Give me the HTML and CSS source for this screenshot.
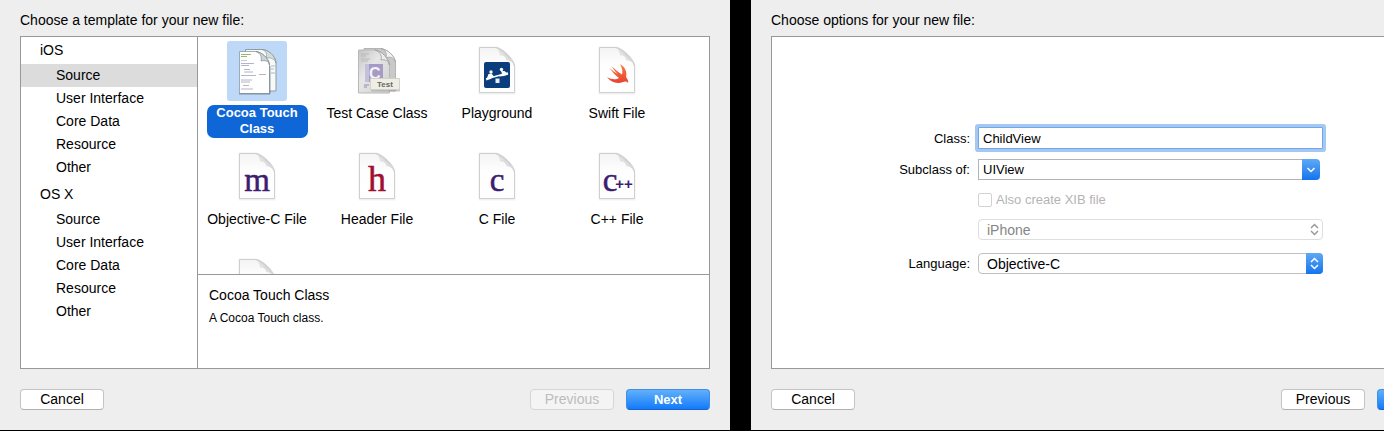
FILE: index.html
```html
<!doctype html>
<html lang="en">
<head>
  <meta charset="UTF-8">
  <meta name="viewport" content="width=device-width, initial-scale=1.0">
  <title>New File</title>
  <link rel="stylesheet" href="styles.css">
</head>
<body>
  <svg class="defs" width="0" height="0" aria-hidden="true">
    <defs>
      <linearGradient id="paper" x1="0" y1="0" x2="0" y2="1">
        <stop offset="0" stop-color="#f4f4f4"/>
        <stop offset=".4" stop-color="#fefefe"/>
        <stop offset="1" stop-color="#fff"/>
      </linearGradient>
      <linearGradient id="curl" x1="0" y1="1" x2="1" y2="0">
        <stop offset="0" stop-color="#fff"/>
        <stop offset=".45" stop-color="#f0f0f0"/>
        <stop offset=".6" stop-color="#cfcfcf"/>
        <stop offset="1" stop-color="#f6f6f6"/>
      </linearGradient>
      <linearGradient id="bird" x1="0" y1="0" x2="0" y2="1">
        <stop offset="0" stop-color="#f5804a"/>
        <stop offset="1" stop-color="#e8402f"/>
      </linearGradient>
      <linearGradient id="grey" x1="0" y1="0" x2="1" y2="1">
        <stop offset="0" stop-color="#c4c4c4"/>
        <stop offset=".4" stop-color="#e6e6e6"/>
        <stop offset="1" stop-color="#cfcfcf"/>
      </linearGradient>
      <symbol id="doc" viewBox="0 0 60 60">
        <path d="M12.5 6.5H29C34 7 47.5 20 47.5 26V52.5H12.5Z" fill="none" stroke="#000" stroke-opacity=".06" stroke-width="2"/>
        <path d="M12.5 6.5H29C35 7 47.5 18 47.5 25V51.5H12.5Z" fill="url(#paper)" stroke="#cfcfcf"/>
        <path d="M29 6.5C32 8 33.5 11 33.5 14C36 13.500 39 15 39.500 18.500C43 19 46.500 21 47.500 25C45 17 36 8 29 6.5Z" fill="url(#curl)" stroke="#cdcdcd" stroke-width=".6"/>
      </symbol>
    </defs>
  </svg>

  <main class="dialog">
    <h1 class="dialog-title">Choose a template for your new file:</h1>
    <div class="panel chooser">
      <nav class="sidebar">
        <h2>iOS</h2>
        <a href="#" class="active">Source</a>
        <a href="#">User Interface</a>
        <a href="#">Core Data</a>
        <a href="#">Resource</a>
        <a href="#">Other</a>
        <h2>OS X</h2>
        <a href="#">Source</a>
        <a href="#">User Interface</a>
        <a href="#">Core Data</a>
        <a href="#">Resource</a>
        <a href="#">Other</a>
      </nav>
      <div class="content">
        <div class="templates">
          <button type="button" class="template selected">
            <svg class="template-icon" viewBox="0 0 60 60">
              <path d="M18.5 8.5H36C41 9 49 15 49 22V50H18.5Z" fill="#f7faf7" stroke="#8f9b9f"/>
              <path d="M35 8.5C40 10 40 14 39 17C43 16 48 18 49 22C48 14 41 9 35 8.5Z" fill="#d5dcdc" stroke="#8f9b9f" stroke-width=".7"/>
              <path d="M44 25h4M44 28h3M44 32h4" stroke="#a9b7c9"/>
              <path d="M12.5 10.5H29C34 11 42.5 17 42.5 24V52.5H12.5Z" fill="#fff" stroke="#8b9aa6" stroke-width=".8"/>
              <path d="M12 53h31V25" fill="none" stroke="#4c5965" stroke-opacity=".55"/>
              <path d="M29 10.5C34 12 35 17 34 20C38 19 42 20 42.5 24C41 16 34 11 29 10.5Z" fill="#cdd6d6" stroke="#7e8b8f" stroke-width=".7"/>
              <path d="M14 13.5h10M14 15.5h6" stroke="#94bd68"/>
              <path d="M14 19.5h6" stroke="#b3bdca" stroke-width=".8"/>
              <path d="M14 22.5h13M14 24.5h8M17 28.5h6M17 31h9" stroke="#98a3c0" stroke-width=".8"/>
              <path d="M14 34.5h15M32 33.5h7M14 39h11M14 41h9M16 44.5h6M14 48h12" stroke="#a0a5b5" stroke-width=".8"/>
            </svg>
            <span class="template-name">Cocoa Touch Class</span>
          </button>
          <button type="button" class="template">
            <svg class="template-icon" viewBox="0 0 60 60">
              <path d="M17 7.5H34C41 9 47 14 48.5 21V50H17Z" fill="#c9c9c9" stroke="#b4b4b4"/>
              <path d="M34 7.5C39 9 40 13 39 17C43 15 47 17 48.5 21C47 14 41 9 34 7.5Z" fill="#f2f2f2" stroke="#a2a2a2" stroke-width=".8"/>
              <path d="M11.5 9H28C35 10 42.5 17 42.5 24V52H11.5Z" fill="url(#grey)" stroke="#b9b9b9"/>
              <path d="M28 9C34 11 35 16 34 19C38 18 42 20 42.5 24C41 17 35 10 28 9Z" fill="#ededed" stroke="#9c9c9c" stroke-width=".8"/>
              <path d="M14 13h8M14 15h5M14 18h9M14 20h7" stroke="#b4b4b4" stroke-width=".8"/>
              <path d="M18 23h18v18H18z" fill="#a59bc4"/>
              <path d="M18 23h4v18h-4z" fill="#c6bfda"/>
              <text x="22" y="38" class="glyph-test-c">C</text>
              <path d="M17 44h5M17 46h3" stroke="#948ab4" stroke-width="1.2"/>
              <path d="M24 39.5h29v11H24z" fill="#999" opacity=".5"/>
              <path d="M23.500 37.500h29v11h-29z" fill="#efeee5" stroke="#d2d1ca"/>
              <text x="30" y="46" class="glyph-test">Test</text>
            </svg>
            <span class="template-name">Test Case Class</span>
          </button>
          <button type="button" class="template">
            <svg class="template-icon" viewBox="0 0 60 60">
              <use href="#doc"/>
              <rect x="17" y="21" width="26" height="26" rx="2" fill="#0b3c7c"/>
              <path d="M19 38L41 32" stroke="#fff" stroke-width="1.6"/>
              <path d="M28.500 37.500h4V42h-4z" fill="#e6edf6"/>
              <circle cx="24" cy="31" r="1.700" fill="#fff"/>
              <circle cx="34.500" cy="28.500" r="1.700" fill="#fff"/>
              <path d="M21.500 33L24.500 32.500L27 35.500L23.500 38L19 39.500ZM34 30L37.500 30L41.500 33.500L37 35L32 35.500L35 32.500Z" fill="#fff"/>
            </svg>
            <span class="template-name">Playground</span>
          </button>
          <button type="button" class="template">
            <svg class="template-icon" viewBox="0 0 60 60">
              <use href="#doc"/>
              <path d="M33 23C38 26 40.5 31 39 36C41 38.5 41.5 41 41 42C39.5 40 37.5 40.5 36 41C30 43.5 23.5 41 20 36C24 38.5 29 39 32 37C28 34 25 30.5 22.5 27C25.5 29.5 28 31.5 30.5 33C28.5 31 26 27.5 24.5 25C28 28.5 31.5 31.5 35 33.5C36 30.5 35 26.5 33 23Z" fill="url(#bird)"/>
            </svg>
            <span class="template-name">Swift File</span>
          </button>
          <button type="button" class="template">
            <svg class="template-icon" viewBox="0 0 60 60">
              <use href="#doc"/>
              <text x="30" y="44" class="glyph">m</text>
            </svg>
            <span class="template-name">Objective-C File</span>
          </button>
          <button type="button" class="template">
            <svg class="template-icon" viewBox="0 0 60 60">
              <use href="#doc"/>
              <text x="30" y="44" class="glyph glyph-header">h</text>
            </svg>
            <span class="template-name">Header File</span>
          </button>
          <button type="button" class="template">
            <svg class="template-icon" viewBox="0 0 60 60">
              <use href="#doc"/>
              <text x="30" y="44" class="glyph">c</text>
            </svg>
            <span class="template-name">C File</span>
          </button>
          <button type="button" class="template">
            <svg class="template-icon" viewBox="0 0 60 60">
              <use href="#doc"/>
              <text x="23" y="44" class="glyph">c</text>
              <text x="37" y="42" class="glyph-plus">++</text>
            </svg>
            <span class="template-name">C++ File</span>
          </button>
          <button type="button" class="template" aria-label="More">
            <svg class="template-icon" viewBox="0 0 60 60">
              <use href="#doc"/>
            </svg>
          </button>
        </div>
        <div class="detail">
          <h3>Cocoa Touch Class</h3>
          <p>A Cocoa Touch class.</p>
        </div>
      </div>
    </div>
    <footer class="actions">
      <button type="button" class="btn">Cancel</button>
      <span class="spacer"></span>
      <button type="button" class="btn" disabled>Previous</button>
      <button type="button" class="btn btn-primary">Next</button>
    </footer>
  </main>

  <section class="dialog">
    <h1 class="dialog-title">Choose options for your new file:</h1>
    <div class="panel">
      <form class="options">
        <label for="class-name">Class:</label>
        <input type="text" id="class-name" class="field focused" value="ChildView">

        <label for="subclass">Subclass of:</label>
        <div class="combo">
          <input type="text" id="subclass" class="field" value="UIView">
          <button type="button" class="combo-button" aria-label="Show classes">
            <svg width="18" height="21" viewBox="0 0 18 21"><path d="M5.5 9L9 12.5L12.5 9"/></svg>
          </button>
        </div>

        <div class="check">
          <input type="checkbox" id="xib" disabled>
          <label for="xib">Also create XIB file</label>
        </div>

        <div class="popup popup-disabled">
          <select aria-label="Device" disabled>
            <option>iPhone</option>
          </select>
          <svg class="popup-arrows" width="17" height="21" viewBox="0 0 17 21"><path d="M5 9L8.500 5.500L12 9M5 12L8.500 15.500L12 12"/></svg>
        </div>

        <label for="language" class="spaced">Language:</label>
        <div class="popup spaced">
          <select id="language">
            <option>Objective-C</option>
            <option>Swift</option>
          </select>
          <svg class="popup-arrows" width="17" height="21" viewBox="0 0 17 21"><path d="M5 9L8.500 5.500L12 9M5 12L8.500 15.500L12 12"/></svg>
        </div>
      </form>
    </div>
    <footer class="actions">
      <button type="button" class="btn">Cancel</button>
      <span class="spacer"></span>
      <button type="button" class="btn">Previous</button>
      <button type="button" class="btn btn-primary">Next</button>
    </footer>
  </section>
</body>
</html>
```
FILE: styles.css
```css
* {
  box-sizing: border-box;
}
body {
  display: flex;
  gap: 21px;
  height: 100vh;
  margin: 0;
  padding-bottom: 1px;
  overflow: hidden;
  background-color: #000;
  font-family: "Liberation Sans", Arial, sans-serif;
  font-size: 14px;
  color: #000;
}
h1, h2, h3, p {
  margin: 0;
  font-size: 14px;
  font-weight: normal;
}
button, input, select {
  font-family: inherit;
  font-size: 14px;
  color: inherit;
}
.defs {
  position: absolute;
}
.dialog {
  display: flex;
  flex: none;
  flex-direction: column;
  width: 730px;
  padding: 10px 20px 20px;
  background-color: #eee;
}
.dialog-title {
  margin-bottom: 6px;
  line-height: 20px;
}
.panel {
  flex: 1;
  min-height: 0;
  border: 1px solid #989898;
  background-color: #fff;
}
.chooser {
  display: flex;
}
/* sidebar */
.sidebar {
  width: 177px;
  border-right: 1px solid #989898;
}
.sidebar h2 {
  padding-left: 19px;
  line-height: 27px;
}
.sidebar a {
  display: block;
  padding-left: 35px;
  line-height: 23px;
  color: #000;
  text-decoration: none;
}
.sidebar a + h2 {
  margin-top: 2px;
}
.sidebar .active {
  background-color: #dcdcdc;
}
/* templates */
.content {
  display: flex;
  flex: 1;
  flex-direction: column;
}
.templates {
  display: grid;
  flex: 1;
  grid-template-columns: repeat(4, 118px);
  grid-auto-rows: 106px;
  column-gap: 2px;
  min-height: 0;
  padding-top: 4px;
  overflow: hidden;
}
.template {
  display: flex;
  flex-direction: column;
  align-items: center;
  gap: 4px;
  padding: 0;
  border: 0;
  background: none;
}
.template-icon {
  flex: none;
  width: 60px;
  height: 60px;
  border-radius: 3px;
}
.template-name {
  line-height: 16px;
}
.selected .template-icon {
  background-color: #bed8f7;
}
.selected .template-name {
  width: 101px;
  padding-bottom: 1px;
  border-radius: 7px;
  background-color: #0f66d6;
  font-size: 13px;
  font-weight: bold;
  color: #fff;
}
.glyph {
  font-family: "Liberation Serif", serif;
  font-size: 33px;
  text-anchor: middle;
  fill: #3c1d70;
  stroke: #3c1d70;
  stroke-width: .5;
}
.glyph-header {
  font-size: 36px;
  fill: #a01030;
  stroke: #a01030;
}
.glyph-plus {
  font-size: 15px;
  font-weight: bold;
  text-anchor: middle;
  fill: #3c1d70;
}
.glyph-test {
  font-size: 8px;
  font-weight: bold;
  fill: #666;
}
.glyph-test-c {
  font-size: 16px;
  font-weight: bold;
  fill: #f4f2fa;
}
.detail {
  height: 94px;
  padding: 10px 11px;
  border-top: 1px solid #989898;
}
.detail h3 {
  line-height: 20px;
}
.detail p {
  margin-top: 4px;
  font-size: 12px;
  line-height: 18px;
}
/* options form */
.options {
  display: grid;
  grid-template-columns: 1fr 345px;
  gap: 10px 8px;
  align-items: center;
  padding: 90px 137px 0 100px;
}
.options label {
  font-size: 13px;
  text-align: right;
}
.field {
  width: 100%;
  height: 21px;
  padding: 0 4px;
  border: 1px solid #b4b4b4;
  background-color: #fff;
  font-size: 13px;
  outline: 0;
}
.focused {
  height: 22px;
  border-color: #6fa8ea;
  border-radius: 1px;
  box-shadow: 0 0 0 3px #a4c8f2;
}
.combo {
  display: flex;
  margin-right: 3px;
}
.combo .field {
  border-right: 0;
}
.combo-button {
  flex: none;
  width: 18px;
  height: 21px;
  padding: 0;
  border: 0;
  border-radius: 0 4px 4px 0;
  background: linear-gradient(#5fa9f6, #1474ee);
}
.combo-button svg {
  display: block;
}
.combo-button path, .popup-arrows path {
  fill: none;
  stroke: #fff;
  stroke-width: 1.5;
}
.check {
  display: flex;
  grid-column: 2;
  align-items: center;
  gap: 4px;
  height: 19px;
}
.check input {
  appearance: none;
  width: 14px;
  height: 14px;
  margin: 0;
  border: 1px solid #d2d2d2;
  border-radius: 2px;
}
.check label {
  color: #b4b4b4;
}
.popup {
  position: relative;
  grid-column: 2;
  height: 21px;
}
.popup select {
  appearance: none;
  width: 100%;
  height: 21px;
  padding: 0 24px 0 8px;
  border: 1px solid #c0c0c0;
  border-radius: 4px;
  background-color: #fff;
}
.popup-arrows {
  position: absolute;
  top: 0;
  right: 0;
  border-radius: 0 4px 4px 0;
  background: linear-gradient(#5fa9f6, #1474ee);
  pointer-events: none;
}
.popup-disabled select {
  border-color: #dedede;
  color: #868686;
  opacity: 1;
}
.popup-disabled .popup-arrows {
  background: none;
}
.popup-disabled .popup-arrows path {
  stroke: #999;
}
.spaced {
  margin-top: 3px;
}
/* bottom buttons */
.actions {
  display: flex;
  gap: 12px;
  margin-top: 20px;
}
.spacer {
  flex: 1;
}
.btn {
  width: 84px;
  height: 21px;
  padding: 0;
  border: 1px solid #c4c4c4;
  border-bottom-color: #b0b0b0;
  border-radius: 4px;
  background-color: #fff;
  line-height: 19px;
}
.btn:disabled {
  border-color: #d6d6d6;
  background-color: #f4f4f4;
  color: #bcbcbc;
}
.btn-primary {
  border-color: #3f8fe6;
  border-bottom-color: #1a62d0;
  background: linear-gradient(#62b0fa, #127bfb);
  font-size: 13px;
  font-weight: bold;
  color: #fff;
}
```
